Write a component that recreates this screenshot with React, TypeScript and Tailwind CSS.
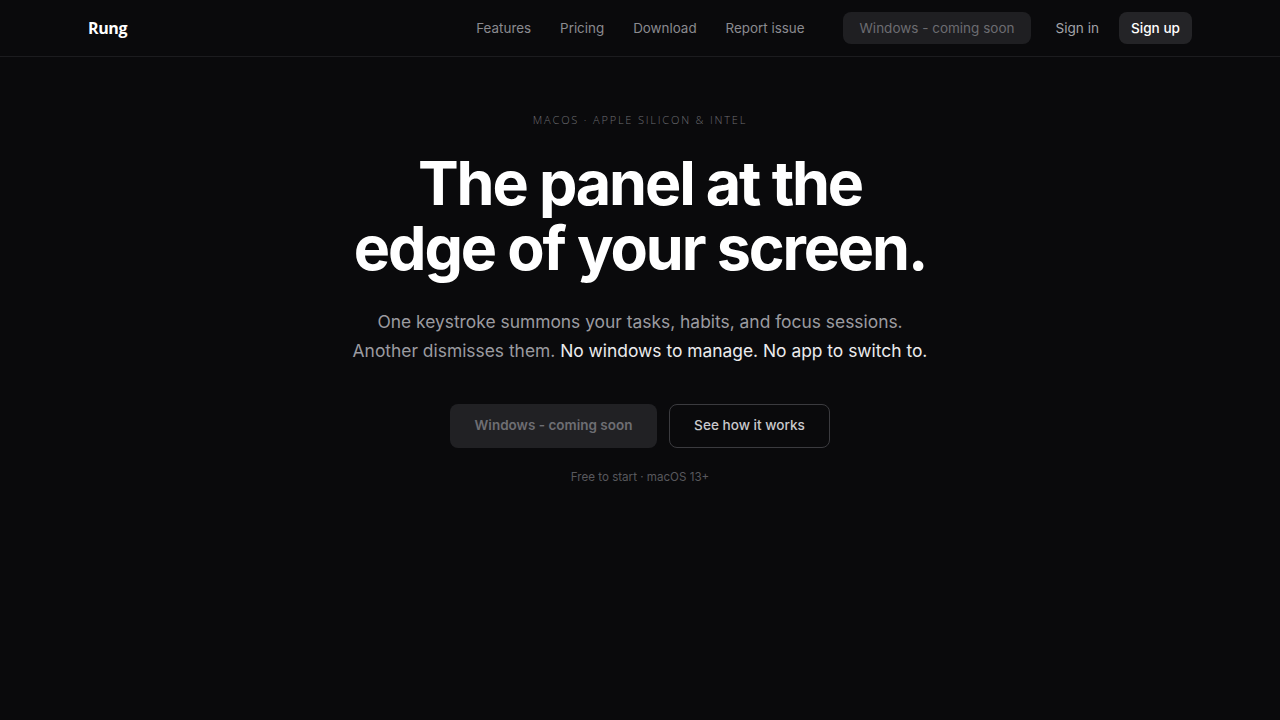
const navLinks = ['Features', 'Pricing', 'Download', 'Report issue'];

function Header() {
  return (
    <header className="border-b border-[#1c1c1f]">
      <div className="mx-auto flex h-14 max-w-[1104px] items-center justify-between">
        <a href="#" className="font-['Open_Sans',sans-serif] text-[16px] font-bold tracking-tight text-white">
          Rung
        </a>
        <nav className="flex items-center">
          <ul className="flex items-center gap-[29px] text-[13.4px] text-[#8b8b90]">
            {navLinks.map((label) => (
              <li key={label}>
                <a href="#" className="hover:text-white">
                  {label}
                </a>
              </li>
            ))}
          </ul>
          <span className="ml-[38px] rounded-lg bg-[#1f1f22] px-[17px] py-[6px] text-[13.5px] text-[#6c6c71]">
            Windows - coming soon
          </span>
          <a href="#" className="ml-6 text-[13.6px] text-[#a3a3a8]">
            Sign in
          </a>
          <a href="#" className="ml-5 rounded-lg bg-[#242427] px-3 py-[6px] text-[13.6px] font-medium text-white">
            Sign up
          </a>
        </nav>
      </div>
    </header>
  );
}

function Hero() {
  return (
    <section className="flex flex-col items-center pt-[55px] text-center">
      <p className="font-['Open_Sans',sans-serif] text-[11px] font-light uppercase tracking-[0.165em] text-[#6e6e73]">
        macOS · Apple Silicon &amp; Intel
      </p>
      <h1 className="mt-[22px] text-[61px] font-bold leading-[65px] tracking-[-0.035em] text-white">
        The panel at the
        <br />
        edge of your screen.
      </h1>
      <p className="mt-[26px] text-[17.4px] leading-[29px] text-[#9b9ba0]">
        One keystroke summons your tasks, habits, and focus sessions.
        <br />
        Another dismisses them. <span className="text-[#ececee]">No windows to manage. No app to switch to.</span>
      </p>
      <div className="mt-[39px] flex items-center gap-3">
        <span className="flex h-11 w-[207px] items-center justify-center rounded-lg bg-[#212124] text-[13.5px] font-semibold text-[#6e6e73]">
          Windows - coming soon
        </span>
        <a
          href="#"
          className="flex h-11 w-[161px] items-center justify-center rounded-lg border border-[#3b3b3f] text-[13.6px] font-medium text-[#c9c9cd]"
        >
          See how it works
        </a>
      </div>
      <p className="mt-[21px] text-[11.6px] text-[#58585d]">Free to start · macOS 13+</p>
    </section>
  );
}

export default function App() {
  return (
    <div className="min-h-screen bg-[#0a0a0c] font-['Inter',sans-serif] antialiased">
      <Header />
      <Hero />
    </div>
  );
}
